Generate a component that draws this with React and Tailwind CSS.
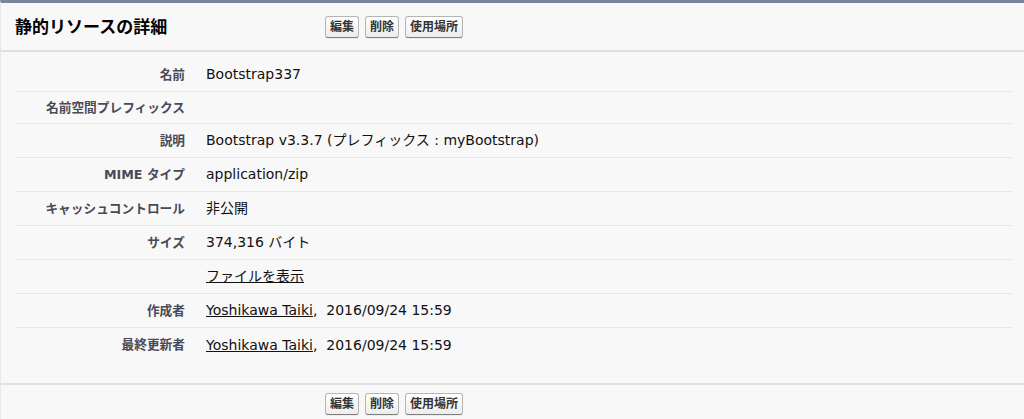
import React from "react";

const font = { fontFamily: '"Liberation Sans", "Noto Sans CJK JP", Arial, sans-serif' };
const valFont = { fontFamily: '"DejaVu Sans", "Noto Sans CJK JP", sans-serif' };

function Btn({ children }) {
  return (
    <button
      className="h-[22px] px-[4px] rounded-[3px] border border-[#b5b5b5] border-b-[#7f7f7f] bg-gradient-to-b from-[#ffffff] to-[#ededed] text-[12px] font-bold text-[#333] leading-none shadow-[0_1px_0_rgba(0,0,0,0.05)]"
      style={font}
    >
      {children}
    </button>
  );
}

function Buttons() {
  return (
    <div className="flex items-center gap-[6px]">
      <Btn>編集</Btn>
      <Btn>削除</Btn>
      <Btn>使用場所</Btn>
    </div>
  );
}

const rows = [
  { label: "名前", value: "Bootstrap337" },
  { label: "名前空間プレフィックス", value: "", h: "h-[32px]" },
  { label: "説明", value: "Bootstrap v3.3.7 (プレフィックス : myBootstrap)" },
  { label: "MIME タイプ", value: "application/zip" },
  { label: "キャッシュコントロール", value: "非公開" },
  { label: "サイズ", value: "374,316 バイト" },
  { label: "", value: <span className="underline">ファイルを表示</span> },
  {
    label: "作成者",
    value: (
      <>
        <span className="underline">Yoshikawa Taiki</span>,&nbsp; 2016/09/24 15:59
      </>
    ),
  },
  {
    label: "最終更新者",
    value: (
      <>
        <span className="underline">Yoshikawa Taiki</span>,&nbsp; 2016/09/24 15:59
      </>
    ),
    last: true,
  },
];

export default function App() {
  return (
    <div className="w-[1024px] h-[419px] bg-[#f8f8f8] border-t-[3px] border-[#7b849e] border-l border-l-[#e8e8e8] overflow-hidden" style={font}>
      <div className="flex items-center h-[49px] border-b-2 border-[#e0e0e0]">
        <div className="w-[324px] pl-[14px] pt-[2px] text-[17px] font-bold text-[#000]">静的リソースの詳細</div>
        <Buttons />
      </div>
      <div className="pt-[6px] pb-[21px] pl-[14px] pr-[12px] border-b-2 border-[#e0e0e0]">
        {rows.map((r, i) => (
          <div
            key={i}
            className={`flex items-center ${r.h || "h-[34px]"} ${r.last ? "" : "border-b border-[#e8e8e8]"}`}
          >
            <div className="w-[170px] text-right text-[12.7px] font-bold text-[#4a4a56]" style={valFont}>{r.label}</div>
            <div className="pl-[21px] text-[14px] text-[#111]" style={valFont}>{r.value}</div>
          </div>
        ))}
      </div>
      <div className="flex items-center h-[38px]">
        <div className="w-[324px]" />
        <Buttons />
      </div>
    </div>
  );
}
